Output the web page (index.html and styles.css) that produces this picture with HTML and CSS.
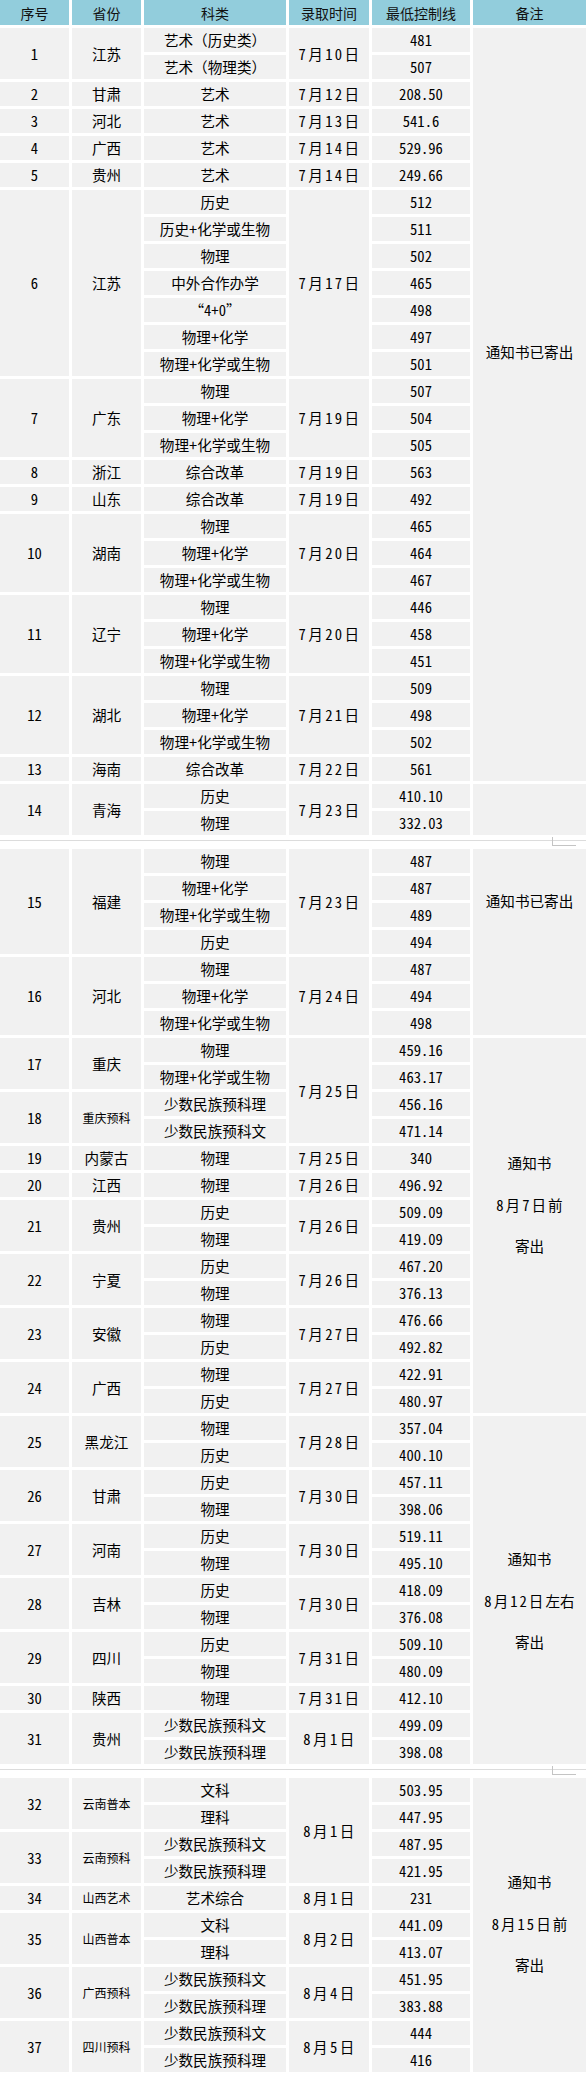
FILE: index.html
```html
<!DOCTYPE html>
<html lang="zh-CN">
<head>
<meta charset="utf-8">
<title>录取分数线</title>
<link rel="stylesheet" href="styles.css">
</head>
<body>
<div class="sheet">
<table class="tbl first">
<colgroup><col class="c1"><col class="c2"><col class="c3"><col class="c4"><col class="c5"><col class="c6"></colgroup>
<thead>
<tr class="head"><th>序号</th><th>省份</th><th>科类</th><th>录取时间</th><th>最低控制线</th><th>备注</th></tr>
</thead>
<tbody>
<tr><td rowspan="2" class="idx">1</td><td rowspan="2">江苏</td><td>艺术（历史类）</td><td rowspan="2" class="date">7月10日</td><td class="num">481</td><td rowspan="28" class="note n1">通知书已寄出</td></tr>
<tr><td>艺术（物理类）</td><td class="num">507</td></tr>
<tr><td class="idx">2</td><td>甘肃</td><td>艺术</td><td class="date">7月12日</td><td class="num">208.50</td></tr>
<tr><td class="idx">3</td><td>河北</td><td>艺术</td><td class="date">7月13日</td><td class="num">541.6</td></tr>
<tr><td class="idx">4</td><td>广西</td><td>艺术</td><td class="date">7月14日</td><td class="num">529.96</td></tr>
<tr><td class="idx">5</td><td>贵州</td><td>艺术</td><td class="date">7月14日</td><td class="num">249.66</td></tr>
<tr><td rowspan="7" class="idx">6</td><td rowspan="7">江苏</td><td>历史</td><td rowspan="7" class="date">7月17日</td><td class="num">512</td></tr>
<tr><td>历史+化学或生物</td><td class="num">511</td></tr>
<tr><td>物理</td><td class="num">502</td></tr>
<tr><td>中外合作办学</td><td class="num">465</td></tr>
<tr><td class="quote">“4+0”</td><td class="num">498</td></tr>
<tr><td>物理+化学</td><td class="num">497</td></tr>
<tr><td>物理+化学或生物</td><td class="num">501</td></tr>
<tr><td rowspan="3" class="idx">7</td><td rowspan="3">广东</td><td>物理</td><td rowspan="3" class="date">7月19日</td><td class="num">507</td></tr>
<tr><td>物理+化学</td><td class="num">504</td></tr>
<tr><td>物理+化学或生物</td><td class="num">505</td></tr>
<tr><td class="idx">8</td><td>浙江</td><td>综合改革</td><td class="date">7月19日</td><td class="num">563</td></tr>
<tr><td class="idx">9</td><td>山东</td><td>综合改革</td><td class="date">7月19日</td><td class="num">492</td></tr>
<tr><td rowspan="3" class="idx">10</td><td rowspan="3">湖南</td><td>物理</td><td rowspan="3" class="date">7月20日</td><td class="num">465</td></tr>
<tr><td>物理+化学</td><td class="num">464</td></tr>
<tr><td>物理+化学或生物</td><td class="num">467</td></tr>
<tr><td rowspan="3" class="idx">11</td><td rowspan="3">辽宁</td><td>物理</td><td rowspan="3" class="date">7月20日</td><td class="num">446</td></tr>
<tr><td>物理+化学</td><td class="num">458</td></tr>
<tr><td>物理+化学或生物</td><td class="num">451</td></tr>
<tr><td rowspan="3" class="idx">12</td><td rowspan="3">湖北</td><td>物理</td><td rowspan="3" class="date">7月21日</td><td class="num">509</td></tr>
<tr><td>物理+化学</td><td class="num">498</td></tr>
<tr><td>物理+化学或生物</td><td class="num">502</td></tr>
<tr><td class="idx">13</td><td>海南</td><td>综合改革</td><td class="date">7月22日</td><td class="num">561</td></tr>
<tr><td rowspan="2" class="idx">14</td><td rowspan="2">青海</td><td>历史</td><td rowspan="2" class="date">7月23日</td><td class="num">410.10</td><td rowspan="2" class="note"></td></tr>
<tr><td>物理</td><td class="num">332.03</td></tr>
</tbody>
</table>

<div class="page-break"><span class="mark"></span></div>

<table class="tbl">
<colgroup><col class="c1"><col class="c2"><col class="c3"><col class="c4"><col class="c5"><col class="c6"></colgroup>
<tbody>
<tr><td rowspan="4" class="idx">15</td><td rowspan="4">福建</td><td>物理</td><td rowspan="4" class="date">7月23日</td><td class="num">487</td><td rowspan="7" class="note n2">通知书已寄出</td></tr>
<tr><td>物理+化学</td><td class="num">487</td></tr>
<tr><td>物理+化学或生物</td><td class="num">489</td></tr>
<tr><td>历史</td><td class="num">494</td></tr>
<tr><td rowspan="3" class="idx">16</td><td rowspan="3">河北</td><td>物理</td><td rowspan="3" class="date">7月24日</td><td class="num">487</td></tr>
<tr><td>物理+化学</td><td class="num">494</td></tr>
<tr><td>物理+化学或生物</td><td class="num">498</td></tr>
<tr><td rowspan="2" class="idx">17</td><td rowspan="2">重庆</td><td>物理</td><td rowspan="4" class="date">7月25日</td><td class="num">459.16</td><td rowspan="14" class="note n3">通知书<br><span class="ds">8月7日</span>前<br>寄出</td></tr>
<tr><td>物理+化学或生物</td><td class="num">463.17</td></tr>
<tr><td rowspan="2" class="idx">18</td><td rowspan="2" class="sm">重庆预科</td><td>少数民族预科理</td><td class="num">456.16</td></tr>
<tr><td>少数民族预科文</td><td class="num">471.14</td></tr>
<tr><td class="idx">19</td><td>内蒙古</td><td>物理</td><td class="date">7月25日</td><td class="num">340</td></tr>
<tr><td class="idx">20</td><td>江西</td><td>物理</td><td class="date">7月26日</td><td class="num">496.92</td></tr>
<tr><td rowspan="2" class="idx">21</td><td rowspan="2">贵州</td><td>历史</td><td rowspan="2" class="date">7月26日</td><td class="num">509.09</td></tr>
<tr><td>物理</td><td class="num">419.09</td></tr>
<tr><td rowspan="2" class="idx">22</td><td rowspan="2">宁夏</td><td>历史</td><td rowspan="2" class="date">7月26日</td><td class="num">467.20</td></tr>
<tr><td>物理</td><td class="num">376.13</td></tr>
<tr><td rowspan="2" class="idx">23</td><td rowspan="2">安徽</td><td>物理</td><td rowspan="2" class="date">7月27日</td><td class="num">476.66</td></tr>
<tr><td>历史</td><td class="num">492.82</td></tr>
<tr><td rowspan="2" class="idx">24</td><td rowspan="2">广西</td><td>物理</td><td rowspan="2" class="date">7月27日</td><td class="num">422.91</td></tr>
<tr><td>历史</td><td class="num">480.97</td></tr>
<tr><td rowspan="2" class="idx">25</td><td rowspan="2">黑龙江</td><td>物理</td><td rowspan="2" class="date">7月28日</td><td class="num">357.04</td><td rowspan="13" class="note n4">通知书<br><span class="ds">8月12日</span>左右<br>寄出</td></tr>
<tr><td>历史</td><td class="num">400.10</td></tr>
<tr><td rowspan="2" class="idx">26</td><td rowspan="2">甘肃</td><td>历史</td><td rowspan="2" class="date">7月30日</td><td class="num">457.11</td></tr>
<tr><td>物理</td><td class="num">398.06</td></tr>
<tr><td rowspan="2" class="idx">27</td><td rowspan="2">河南</td><td>历史</td><td rowspan="2" class="date">7月30日</td><td class="num">519.11</td></tr>
<tr><td>物理</td><td class="num">495.10</td></tr>
<tr><td rowspan="2" class="idx">28</td><td rowspan="2">吉林</td><td>历史</td><td rowspan="2" class="date">7月30日</td><td class="num">418.09</td></tr>
<tr><td>物理</td><td class="num">376.08</td></tr>
<tr><td rowspan="2" class="idx">29</td><td rowspan="2">四川</td><td>历史</td><td rowspan="2" class="date">7月31日</td><td class="num">509.10</td></tr>
<tr><td>物理</td><td class="num">480.09</td></tr>
<tr><td class="idx">30</td><td>陕西</td><td>物理</td><td class="date">7月31日</td><td class="num">412.10</td></tr>
<tr><td rowspan="2" class="idx">31</td><td rowspan="2">贵州</td><td>少数民族预科文</td><td rowspan="2" class="date">8月1日</td><td class="num">499.09</td></tr>
<tr><td>少数民族预科理</td><td class="num">398.08</td></tr>
</tbody>
</table>

<div class="page-break"><span class="mark"></span></div>

<table class="tbl">
<colgroup><col class="c1"><col class="c2"><col class="c3"><col class="c4"><col class="c5"><col class="c6"></colgroup>
<tbody>
<tr><td rowspan="2" class="idx">32</td><td rowspan="2" class="sm">云南普本</td><td>文科</td><td rowspan="4" class="date">8月1日</td><td class="num">503.95</td><td rowspan="11" class="note n5">通知书<br><span class="ds">8月15日</span>前<br>寄出</td></tr>
<tr><td>理科</td><td class="num">447.95</td></tr>
<tr><td rowspan="2" class="idx">33</td><td rowspan="2" class="sm">云南预科</td><td>少数民族预科文</td><td class="num">487.95</td></tr>
<tr><td>少数民族预科理</td><td class="num">421.95</td></tr>
<tr><td class="idx">34</td><td class="sm">山西艺术</td><td>艺术综合</td><td class="date">8月1日</td><td class="num">231</td></tr>
<tr><td rowspan="2" class="idx">35</td><td rowspan="2" class="sm">山西普本</td><td>文科</td><td rowspan="2" class="date">8月2日</td><td class="num">441.09</td></tr>
<tr><td>理科</td><td class="num">413.07</td></tr>
<tr><td rowspan="2" class="idx">36</td><td rowspan="2" class="sm">广西预科</td><td>少数民族预科文</td><td rowspan="2" class="date">8月4日</td><td class="num">451.95</td></tr>
<tr><td>少数民族预科理</td><td class="num">383.88</td></tr>
<tr><td rowspan="2" class="idx">37</td><td rowspan="2" class="sm">四川预科</td><td>少数民族预科文</td><td rowspan="2" class="date">8月5日</td><td class="num">444</td></tr>
<tr><td>少数民族预科理</td><td class="num">416</td></tr>
</tbody>
</table>
</div>
</body>
</html>
```

FILE: styles.css
```css
html, body {
  margin: 0;
  padding: 0;
  background: #ffffff;
  overflow: hidden;
}

.sheet {
  width: 586px;
  display: flex;
  flex-direction: column;
  overflow: hidden;
}

.tbl {
  width: 592px;
  margin: 0 -3px;
  table-layout: fixed;
  border-collapse: separate;
  border-spacing: 3px;
  font-family: "Noto Sans CJK SC", "Noto Sans", sans-serif;
  font-size: 14.6px;
  color: #000;
}

.tbl.first {
  margin-top: -3px;
}

.c1 { width: 69px; }
.c2 { width: 69px; }
.c3 { width: 142px; }
.c4 { width: 80px; }
.c5 { width: 98px; }
.c6 { width: 113px; }

.tbl th,
.tbl td {
  padding: 0;
  border: 0;
  text-align: center;
  vertical-align: middle;
  white-space: nowrap;
  line-height: 20px;
}

.tbl td {
  height: 24px;
  background: #f1f1f1;
}

.head th {
  height: 25px;
  background: #92cddc;
  font-weight: normal;
  font-size: 14px;
  color: #111;
}

.idx,
.num {
  font-feature-settings: "hwid" 1;
}

.date {
  font-feature-settings: "hwid" 1;
  letter-spacing: 2.4px;
  padding-left: 2px !important;
}

.ds {
  font-feature-settings: "hwid" 1;
  letter-spacing: 2px;
}

.sm {
  font-size: 12px;
}

.quote {
  font-feature-settings: "hwid" 1;
}

.tbl td.note {
  vertical-align: top;
  line-height: 41.5px;
}

.tbl td.n1 { padding-top: 303px; }
.tbl td.n2 { padding-top: 31px; }
.tbl td.n3 { padding-top: 104px; }
.tbl td.n4 { padding-top: 122px; }
.tbl td.n5 { padding-top: 83px; }

.page-break {
  position: relative;
  height: 8px;
  flex: none;
}

.page-break::before {
  content: "";
  position: absolute;
  left: 0;
  right: 0;
  top: 2px;
  height: 1px;
  background: #dcdcdc;
}

.page-break .mark {
  position: absolute;
  left: 552px;
  top: -1px;
  width: 23px;
  height: 8px;
  border-left: 1px solid #c4c4c4;
  border-bottom: 1px solid #c4c4c4;
}
```
